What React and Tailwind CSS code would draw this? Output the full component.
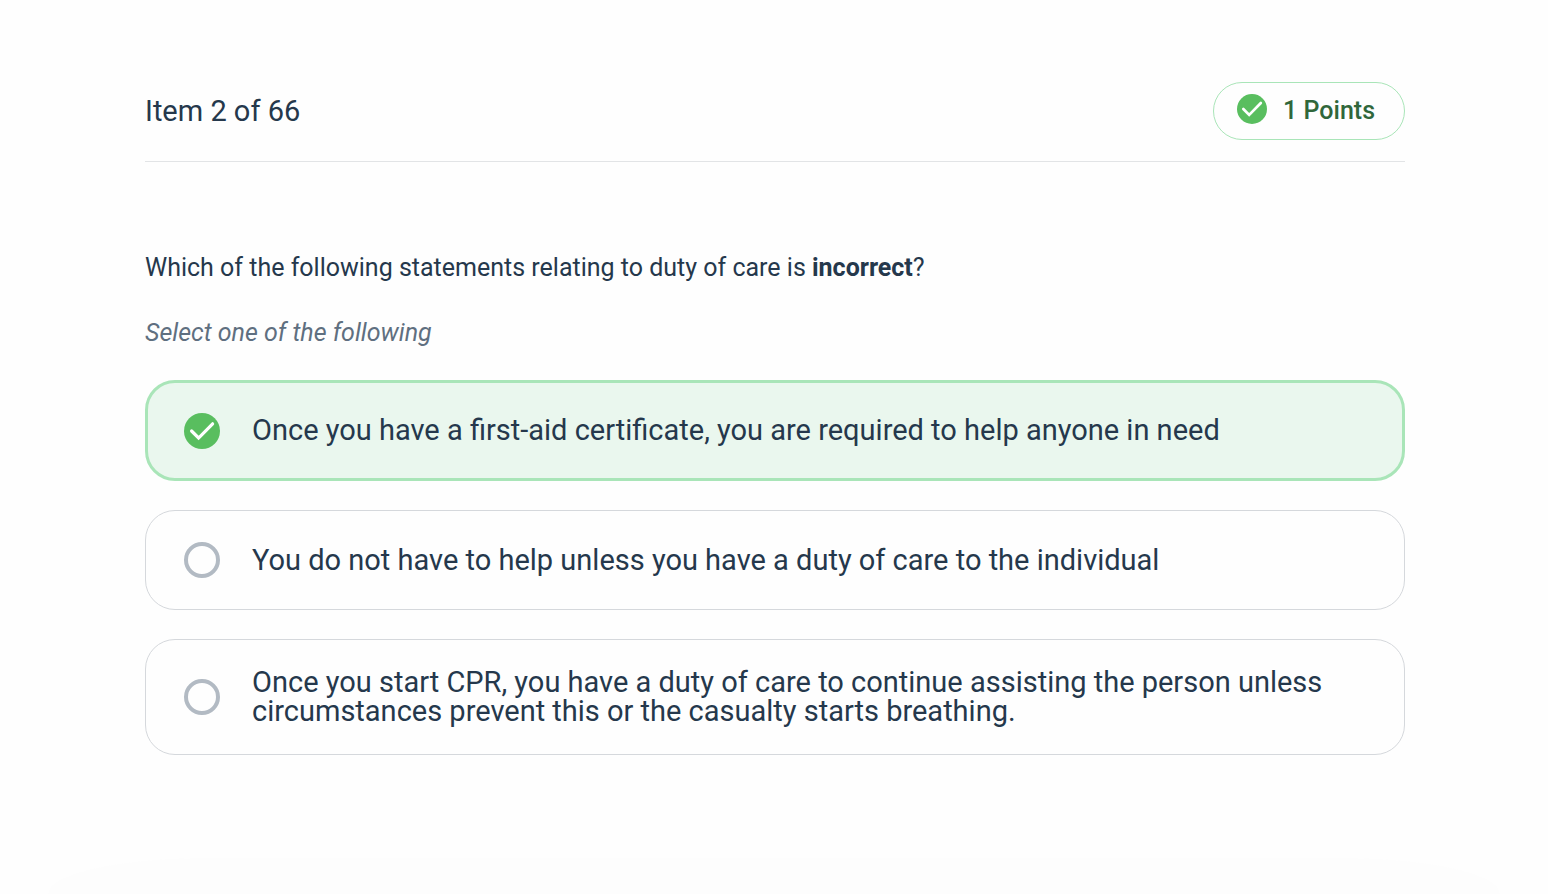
const OPTIONS = [
  'Once you have a first-aid certificate, you are required to help anyone in need',
  'You do not have to help unless you have a duty of care to the individual',
  'Once you start CPR, you have a duty of care to continue assisting the person unless circumstances prevent this or the casualty starts breathing.',
]

export default function App() {
  return (
    <div className="flex min-h-screen flex-col bg-[#fefefe] font-[Roboto,sans-serif] text-[#25384c]">
      <main className="pt-20 pr-[143px] pl-[145px]">
        <header className="flex items-center justify-between border-b border-[#e2e4e6] pt-0.5 pb-[21px]">
          <h1 className="text-[29px] leading-9">Item 2 of 66</h1>
          <div className="flex items-center gap-4 rounded-full border border-[#a9e5b8] py-2.5 pr-[29px] pl-[23px]">
            <CheckIcon className="mb-1 size-[30px]" />
            <span className="text-[25px] leading-9 font-medium text-[#30673b]">1 Points</span>
          </div>
        </header>

        <form>
          <fieldset>
            <legend className="pt-[88px] text-[25px] leading-9">
              Which of the following statements relating to duty of care is <strong>incorrect</strong>?
            </legend>
            <p className="mt-[29px] text-[25px] leading-9 text-[#5f6f80] italic">Select one of the following</p>
            <div className="mt-[29px] space-y-[29px]">
              {OPTIONS.map((text, i) => <Option key={i} text={text} defaultChecked={i === 0} />)}
            </div>
          </fieldset>
        </form>
      </main>

      {/* soft shade along the bottom edge */}
      <div className="mx-12 mt-auto h-9 rounded-t-[160px_36px] bg-[#fdfdfd]" />
    </div>
  )
}

function Option({ text, defaultChecked }) {
  return (
    <label className="flex min-h-[100px] cursor-pointer items-center gap-8 rounded-[30px] border border-[#d5d8dc] px-[38px] py-7 has-checked:min-h-[101px] has-checked:border-3 has-checked:border-[#a9e5b8] has-checked:bg-[#eaf7ee] has-checked:px-9">
      <span className="grid shrink-0">
        <input type="radio" name="answer" defaultChecked={defaultChecked}
          className="peer col-start-1 row-start-1 size-9 appearance-none rounded-full border-4 border-[#b2bac3] checked:border-0" />
        <CheckIcon className="pointer-events-none col-start-1 row-start-1 hidden size-9 peer-checked:block" />
      </span>
      <span className="text-[29px] leading-[29px]">{text}</span>
    </label>
  )
}

function CheckIcon({ className }) {
  return (
    <svg viewBox="0 0 36 36" className={className} aria-hidden="true">
      <circle cx="18" cy="18" r="18" fill="#59be5f" />
      <path d="M7.6 18l7 7L28.6 10.8" fill="none" stroke="#fff" strokeWidth="3.2" strokeLinecap="round" />
    </svg>
  )
}
